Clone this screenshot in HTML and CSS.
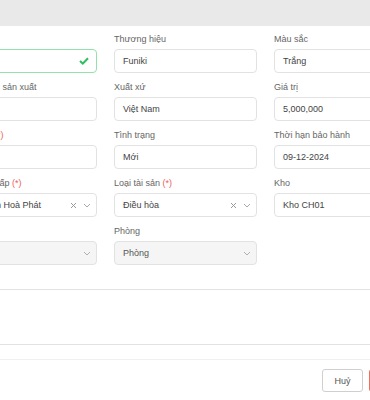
FILE: index.html
```html
<!DOCTYPE html>
<html lang="vi">
<head>
    <meta charset="UTF-8">
    <meta name="viewport" content="width=device-width, initial-scale=1.0">
    <title>Tài sản</title>
    <link rel="stylesheet" href="styles.css">
</head>
<body>
    <div class="topbar"></div>
    <main class="modal">
        <section class="form">
            <div class="field">
                <label>&nbsp;</label>
                <div class="input valid">
                    <svg class="check" width="10" height="8" viewBox="0 0 10 8"><polyline points="1,4 3.8,6.6 9,1.2" fill="none" stroke="#2bbf5e" stroke-width="2"/></svg>
                </div>
            </div>
            <div class="field">
                <label>Thương hiệu</label>
                <div class="input">Funiki</div>
            </div>
            <div class="field">
                <label>Màu sắc</label>
                <div class="input">Trắng</div>
            </div>

            <div class="field">
                <label>Ngày tháng sản xuất</label>
                <div class="input"></div>
            </div>
            <div class="field">
                <label>Xuất xứ</label>
                <div class="input">Việt Nam</div>
            </div>
            <div class="field">
                <label>Giá trị</label>
                <div class="input">5,000,000</div>
            </div>

            <div class="field">
                <label>Số lượng <span class="req">(*)</span></label>
                <div class="input"></div>
            </div>
            <div class="field">
                <label>Tình trạng</label>
                <div class="input">Mới</div>
            </div>
            <div class="field">
                <label>Thời hạn bảo hành</label>
                <div class="input">09-12-2024</div>
            </div>

            <div class="field">
                <label>Nhà cung cấp <span class="req">(*)</span></label>
                <div class="input select">Tập đoàn Hoà Phát
                    <svg class="clear" width="7" height="7" viewBox="0 0 7 7"><path d="M1 1L6 6M6 1L1 6" stroke="#9a9a9a" stroke-width="1"/></svg>
                    <svg class="arrow" width="8" height="5" viewBox="0 0 8 5"><polyline points="1,1 4,4 7,1" fill="none" stroke="#a8a8a8" stroke-width="1"/></svg>
                </div>
            </div>
            <div class="field">
                <label>Loại tài sản <span class="req">(*)</span></label>
                <div class="input select">Điều hòa
                    <svg class="clear" width="7" height="7" viewBox="0 0 7 7"><path d="M1 1L6 6M6 1L1 6" stroke="#9a9a9a" stroke-width="1"/></svg>
                    <svg class="arrow" width="8" height="5" viewBox="0 0 8 5"><polyline points="1,1 4,4 7,1" fill="none" stroke="#a8a8a8" stroke-width="1"/></svg>
                </div>
            </div>
            <div class="field">
                <label>Kho</label>
                <div class="input">Kho CH01</div>
            </div>

            <div class="field">
                <label>&nbsp;</label>
                <div class="input select disabled">
                    <svg class="arrow" width="8" height="5" viewBox="0 0 8 5"><polyline points="1,1 4,4 7,1" fill="none" stroke="#b0b0b0" stroke-width="1"/></svg>
                </div>
            </div>
            <div class="field">
                <label>Phòng</label>
                <div class="input select disabled">
                    <span>Phòng</span>
                    <svg class="arrow" width="8" height="5" viewBox="0 0 8 5"><polyline points="1,1 4,4 7,1" fill="none" stroke="#b0b0b0" stroke-width="1"/></svg>
                </div>
            </div>
            <div class="field"></div>

            <div class="field wide">
                <label>&nbsp;</label>
                <div class="textarea"></div>
            </div>
        </section>
        <footer class="footer">
            <button class="btn">Huỷ</button>
            <button class="btn primary"></button>
        </footer>
    </main>
</body>
</html>
```

FILE: styles.css
```css
html,
body {
    margin: 0;
    overflow: hidden;
    background: #fff;
}

body {
    font-family: "Liberation Sans", Arial, sans-serif;
    font-size: 9px;
    color: #444;
}

.topbar {
    height: 26px;
    background: #e9e9e9;
}

.form {
    display: grid;
    grid-template-columns: repeat(3, 143px);
    column-gap: 17px;
    row-gap: 8px;
    margin-left: -46px;
    padding-top: 7px;
}

.field label {
    display: block;
    height: 13px;
    line-height: 13px;
    margin-bottom: 3px;
    color: #666;
    white-space: nowrap;
}

.req {
    color: #ef5a5a;
}

.input {
    height: 24px;
    box-sizing: border-box;
    border: 1px solid #e2e2e2;
    border-radius: 4px;
    padding: 0 8px;
    display: flex;
    align-items: center;
    color: #444;
    background: #fff;
}

.input.valid {
    border-color: #93e2ad;
}

.check {
    margin-left: auto;
    margin-right: -1px;
}

.select .clear {
    margin-left: auto;
    margin-right: 6px;
}

.select .arrow {
    margin-right: -3px;
}

.select.disabled .arrow {
    margin-left: auto;
}

.disabled {
    background: #f5f5f5;
    color: #555;
}

.wide {
    grid-column: 1 / -1;
}

.textarea {
    height: 56px;
    box-sizing: border-box;
    border: 1px solid #e2e2e2;
    border-radius: 4px;
    width: 500px;
}

.footer {
    width: 430px;
    box-sizing: border-box;
    margin-top: 14px;
    border-top: 1px solid #f0f0f0;
    padding: 9px 6px 0 0;
    display: flex;
    justify-content: flex-end;
    gap: 6px;
}

.btn {
    height: 23px;
    width: 41px;
    box-sizing: border-box;
    border: 1px solid #cfcfcf;
    border-radius: 3px;
    background: #fff;
    font-family: inherit;
    font-size: 9px;
    color: #555;
    padding: 0;
}

.btn.primary {
    width: 55px;
    border-color: #f26d5b;
    background: #f26d5b;
    color: #fff;
}
```
